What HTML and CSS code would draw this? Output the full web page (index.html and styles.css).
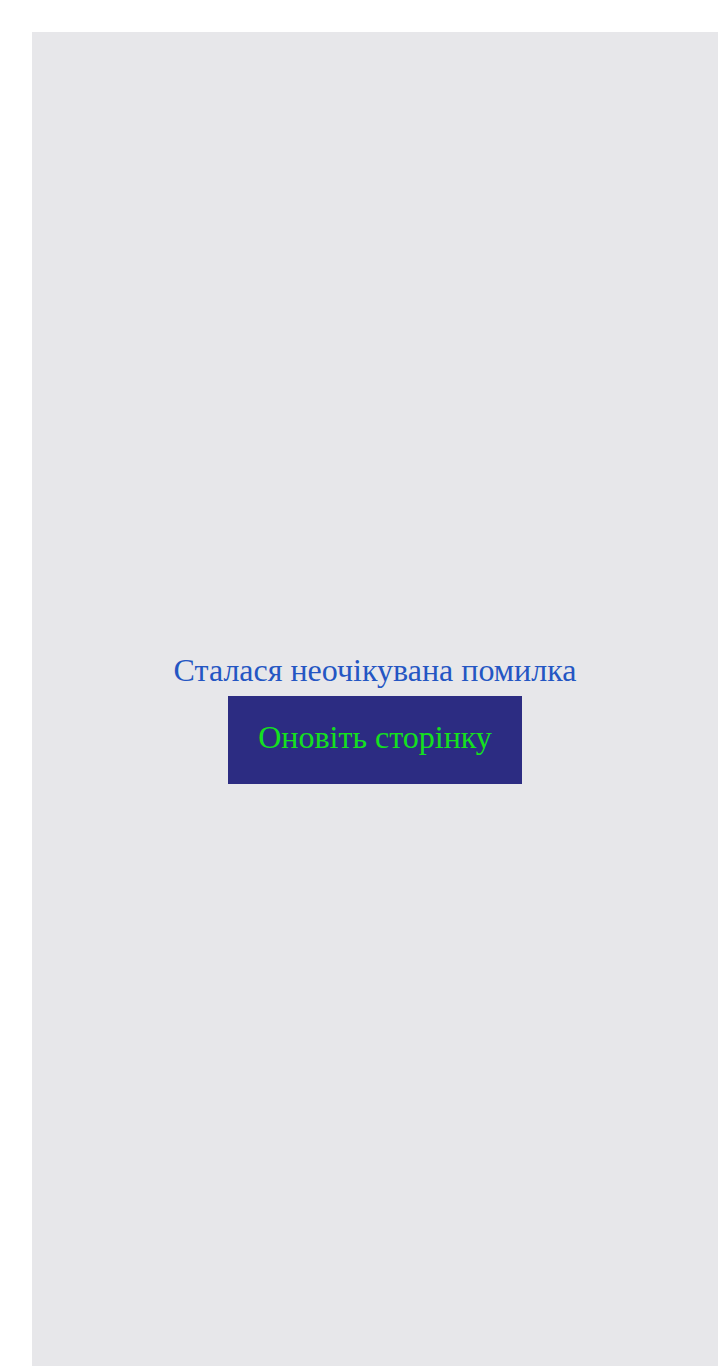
FILE: index.html
```html
<!DOCTYPE html>
<html lang="uk">
<head>
<meta charset="utf-8">
<title>Помилка</title>
<link rel="stylesheet" href="styles.css">
</head>
<body>
<main class="error-screen">
  <p class="error-title">Сталася неочікувана помилка</p>
  <button class="reload-btn" type="button">Оновіть сторінку</button>
</main>
</body>
</html>
```

FILE: styles.css
```css
html, body {
  margin: 0;
  padding: 0;
  background: #ffffff;
  overflow: hidden;
}

body {
  padding: 32px 0 0 32px;
  font-family: "Liberation Serif", "Times New Roman", serif;
}

.error-screen {
  background: #e7e7ea;
  width: calc(100vw - 32px);
  height: 1372px;
  display: flex;
  flex-direction: column;
  align-items: center;
  justify-content: center;
  gap: 7px;
}

.error-title {
  margin: 0;
  font-size: 32px;
  color: #2456c3;
}

.reload-btn {
  box-sizing: border-box;
  font-family: "Liberation Serif", "Times New Roman", serif;
  font-size: 32px;
  color: #14e11e;
  background: #2c2c82;
  border: none;
  height: 88px;
  padding: 0 30px 5px;
  cursor: pointer;
}
```
